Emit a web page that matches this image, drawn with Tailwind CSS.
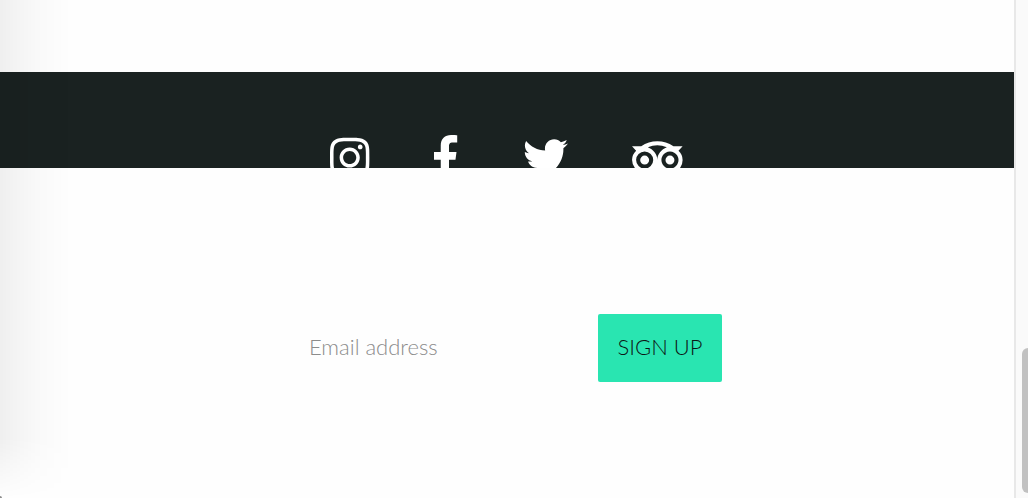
<!DOCTYPE html>
<html lang="en">
<head>
<meta charset="utf-8">
<meta name="viewport" content="width=device-width, initial-scale=1">
<title>Sign up</title>
<script src="https://cdn.jsdelivr.net/npm/@tailwindcss/browser@4"></script>
</head>
<body class="flex h-screen overflow-hidden bg-white font-[Lato,sans-serif]">
<div class="relative flex min-w-0 flex-1 flex-col bg-[#fefefe] pt-18">
  <nav aria-label="Social media" class="flex h-24 items-start justify-center gap-16 overflow-hidden bg-[#1a2221] pt-[63px] pr-px text-white">
    <a href="#instagram" aria-label="Instagram"><svg class="h-[45px] w-10" viewBox="0 0 448 512" preserveAspectRatio="xMinYMid" fill="currentColor"><path d="M224.1 141c-63.600 0-114.900 51.300-114.900 114.900s51.300 114.900 114.900 114.900S339 319.500 339 255.900 287.700 141 224.100 141zm0 189.600c-41.100 0-74.700-33.500-74.700-74.700s33.500-74.700 74.700-74.700 74.700 33.500 74.700 74.700-33.600 74.700-74.700 74.700zm146.400-194.300c0 14.900-12 26.800-26.800 26.800-14.900 0-26.800-12-26.800-26.800s12-26.800 26.800-26.800 26.800 12 26.800 26.800zm76.100 27.200c-1.700-35.900-9.900-67.700-36.200-93.900-26.200-26.200-58-34.400-93.900-36.200-37-2.100-147.900-2.100-184.900 0-35.800 1.700-67.600 9.900-93.900 36.100s-34.400 58-36.200 93.900c-2.100 37-2.100 147.900 0 184.900 1.700 35.900 9.900 67.700 36.200 93.900s58 34.400 93.900 36.200c37 2.100 147.900 2.100 184.900 0 35.900-1.700 67.700-9.900 93.900-36.200 26.200-26.200 34.400-58 36.200-93.900 2.100-37 2.100-147.800 0-184.800zM398.800 388c-7.800 19.600-22.900 34.700-42.600 42.600-29.500 11.700-99.500 9-132.100 9s-102.700 2.600-132.100-9c-19.600-7.800-34.700-22.900-42.600-42.600-11.700-29.500-9-99.500-9-132.100s-2.600-102.700 9-132.100c7.800-19.600 22.900-34.700 42.600-42.600 29.500-11.700 99.500-9 132.100-9s102.700-2.600 132.100 9c19.600 7.800 34.700 22.900 42.600 42.600 11.700 29.500 9 99.500 9 132.100s2.700 102.700-9 132.100z"/></svg></a>
    <a href="#facebook" aria-label="Facebook"><svg class="h-[45px] w-[25px]" viewBox="0 0 264 512" preserveAspectRatio="xMinYMid" fill="currentColor"><path d="M76.700 512V283H0v-91h76.700v-71.700C76.700 42.400 124.300 0 193.800 0c33.300 0 61.900 2.500 70.200 3.600V85h-48.200c-37.800 0-45.100 18-45.100 44.300V192H256l-11.700 91h-73.600v229"/></svg></a>
    <a href="#twitter" aria-label="Twitter"><svg class="h-[45px] w-[45px]" viewBox="0 0 512 512" fill="currentColor"><path d="M459.370 151.716c.325 4.548.325 9.097.325 13.645 0 138.720-105.583 298.558-298.558 298.558-59.452 0-114.680-17.219-161.137-47.106 8.447.974 16.568 1.299 25.340 1.299 49.055 0 94.213-16.568 130.274-44.832-46.132-.975-84.792-31.188-98.112-72.772 6.498.974 12.995 1.624 19.818 1.624 9.421 0 18.843-1.300 27.614-3.573-48.081-9.747-84.143-51.980-84.143-102.985v-1.299c13.969 7.797 30.214 12.670 47.431 13.319-28.264-18.843-46.781-51.005-46.781-87.391 0-19.492 5.197-37.360 14.294-52.954 51.655 63.675 129.300 105.258 216.365 109.807-1.624-7.797-2.599-15.918-2.599-24.040 0-57.828 46.782-104.934 104.934-104.934 30.213 0 57.502 12.670 76.670 33.137 23.715-4.548 46.456-13.320 66.599-25.340-7.798 24.366-24.366 44.833-46.132 57.827 21.117-2.273 41.584-8.122 60.426-16.243-14.292 20.791-32.161 39.308-52.628 54.253z"/></svg></a>
    <a href="#tripadvisor" aria-label="Tripadvisor"><svg class="h-[45px] w-[51px]" viewBox="0 0 576 512" preserveAspectRatio="xMinYMid" fill="currentColor"><path d="M528.910 178.820 576 127.580H471.660a326.110 326.110 0 0 0-367 0H0l47.090 51.240A143.911 143.911 0 0 0 241.860 390.730L288 440.930l46.110-50.170A143.940 143.940 0 0 0 575.880 285.180h-.03A143.560 143.560 0 0 0 528.910 178.820ZM144.060 382.570a97.390 97.390 0 1 1 97.390-97.390A97.390 97.390 0 0 1 144.060 382.570ZM288 282.370c0-64.090-46.620-119.080-108.090-142.590a281 281 0 0 1 216.170 0C334.610 163.300 288 218.290 288 282.370Zm143.880 100.200h-.01a97.405 97.405 0 1 1 .01 0ZM144.060 234.120h-.01a51.060 51.060 0 1 0 51.060 51.060v-.11A51 51 0 0 0 144.060 234.120Zm287.820 0a51.060 51.060 0 1 0 51.060 51.060A51.060 51.060 0 0 0 431.880 234.120Z"/></svg></a>
  </nav>
  <form class="flex flex-1 items-center justify-center pt-[30px]">
    <input type="email" aria-label="Email address" placeholder="Email address" class="h-17 w-[306px] px-[17px] pb-[3px] text-[22px] font-light text-[#1a2221] outline-none placeholder:text-[#8c8c8c]">
    <button type="button" class="h-17 w-31 rounded-xs bg-[#29e5b1] pb-[3px] text-[22px] font-light text-[#0d1715]">SIGN UP</button>
  </form>
  <!-- Soft shade along the left edge, fading out at the bottom corner -->
  <div class="pointer-events-none absolute inset-y-0 left-0 w-18 bg-linear-to-r from-black/6 via-black/2 to-transparent mask-b-from-[calc(100%-60px)] mask-b-to-100%"></div>
  <!-- Rounded window corner -->
  <div class="pointer-events-none absolute bottom-0 left-0 size-0.5 rounded-tr-full bg-[#8c8c8c]"></div>
</div>
<div aria-hidden="true" class="flex w-3.5 flex-col items-end justify-end border-l-2 border-[#e8e8e8] bg-[#fafafa] pb-[5px]">
  <div class="h-[145px] w-1.5 rounded-l-lg bg-[#c1c1c1]"></div>
</div>
</body>
</html>
